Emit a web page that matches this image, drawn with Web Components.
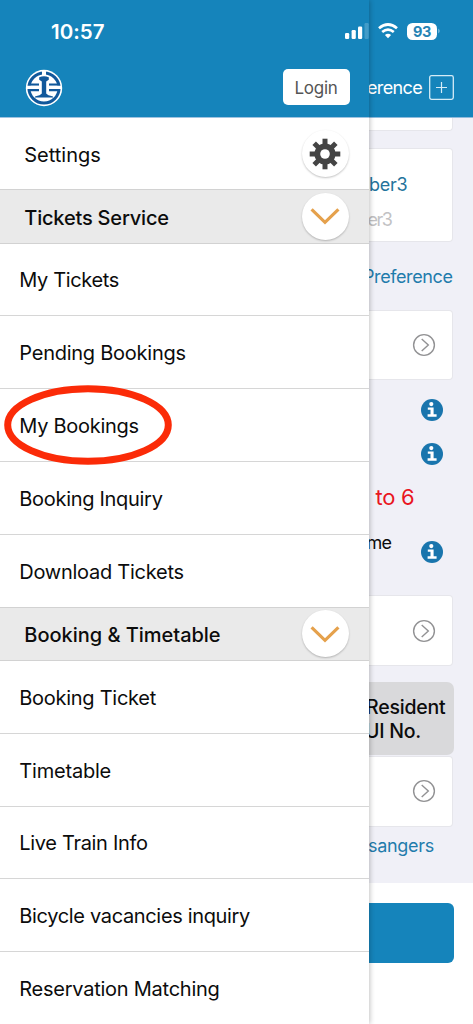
<!DOCTYPE html>
<html lang="en">
<head>
<meta charset="utf-8">
<title>Railway booking menu</title>
<style>
html,body{margin:0;height:100%;overflow:hidden;background:#fff}
body{font-family:Inter,"Liberation Sans",sans-serif;color:#0c0c0c}
</style>
</head>
<body>
<rail-app></rail-app>
<script>
const define = (name, html, setup) => {
  const t = document.createElement('template');
  t.innerHTML = html;
  customElements.define(name, class extends HTMLElement {
    constructor() {
      super();
      this.attachShadow({mode: 'open'}).append(t.content.cloneNode(true));
    }
    connectedCallback() { if (setup) setup(this, this.shadowRoot); }
  });
};

/* Label tracked out or in so that its text spans the width given in w */
define('fit-label', `<style>:host{display:inline-block;white-space:nowrap}span{display:inline-block}</style><span><slot></slot></span>`,
  (el, root) => {
    const span = root.querySelector('span');
    const n = el.textContent.length;
    span.style.letterSpacing = '0px';
    const natural = span.getBoundingClientRect().width;
    span.style.letterSpacing = ((Number(el.getAttribute('w')) - natural) / n).toFixed(3) + 'px';
  });

define('rail-logo', `<style>:host{display:block;width:38px;height:38px}svg{display:block}</style>
<svg width="38" height="38" viewBox="-19 -19 38 38">
<circle r="18.2" fill="#fff"/><circle r="15.1" fill="none" stroke="#11589b" stroke-width="3"/>
<path d="M-15.5-3.4H-5M5-3.4H15.5M-15.5 2.2H-5M5 2.2H15.5" stroke="#11589b" stroke-width="2.3"/>
<path d="M0-18V-11" stroke="#fff" stroke-width="4"/>
<path d="M-17.5-.6H17.5" stroke="#fff" stroke-width="3.1"/>
<path d="M-4.8-10.8Q0-12.8 4.8-10.8V-8.2L2.2-6.6V5.4Q3.4 7.2 9 8.4V9.6H-9V8.4Q-3.4 7.2-2.2 5.4V-6.6L-4.8-8.2Z" fill="#11589b"/>
</svg>`);

define('login-button', `<style>:host{display:flex;align-items:center;justify-content:center;width:67px;height:36.5px;border-radius:5px;background:#fff;color:#555;font-size:17px}</style><slot></slot>`);

define('menu-header', `<style>:host{display:flex;box-sizing:border-box;height:118px;padding:68.5px 19.5px 0 24.5px;align-items:flex-start;justify-content:space-between;background:#1584bb;border-bottom:1px solid #9fc3e0}</style>
<rail-logo></rail-logo><login-button><fit-label w="43" style="position:relative;top:1px">Login</fit-label></login-button>`);

define('round-button', `<style>:host{display:flex;align-items:center;justify-content:center;width:47px;height:47px;border-radius:50%;background:#fff;box-shadow:0 1px 2px rgba(0,0,0,.24)}svg{display:none}:host([icon=gear]) .gear,:host([icon=chevron]) .chevron{display:block}</style>
<svg class="gear" width="32" height="32" viewBox="-16 -16 32 32"><g fill="#444"><path d="M-2.5-15.3H2.5V15.3H-2.5Z"/><path d="M-2.5-15.3H2.5V15.3H-2.5Z" transform="rotate(45)"/><path d="M-2.5-15.3H2.5V15.3H-2.5Z" transform="rotate(90)"/><path d="M-2.5-15.3H2.5V15.3H-2.5Z" transform="rotate(135)"/><circle r="10.6"/></g><circle r="4.8" fill="#fff"/></svg>
<svg class="chevron" width="32" height="20" viewBox="0 0 32 20"><path d="M2.6 3.4L16 16.3L29.4 3.4" fill="none" stroke="#e5a14c" stroke-width="3.2"/></svg>`);

define('menu-settings', `<style>:host{display:flex;box-sizing:border-box;height:71px;padding:0 20.5px 0 24.3px;align-items:center;justify-content:space-between;font-size:20px}slot{display:block;padding-top:2.5px}</style><slot></slot><round-button icon="gear"></round-button>`);

define('menu-group', `<style>:host{display:flex;box-sizing:border-box;height:54.5px;padding:0 20.5px 0 24.3px;align-items:center;justify-content:space-between;background:#eaeaea;border-top:1px solid #d2d2d2;border-bottom:1px solid #d2d2d2;font-size:20px;font-weight:550}slot{display:block;padding-top:var(--drop,3px)}</style><slot></slot><round-button icon="chevron"></round-button>`);

define('menu-item', `<style>:host{display:flex;position:relative;box-sizing:border-box;height:72.8px;padding:2px 0 0 19.3px;align-items:center;border-bottom:1px solid #d6d6d6;font-size:20px}:host([last]){border:0}
svg{display:none;position:absolute;left:3px;top:-5px}:host([marked]) svg{display:block}</style><slot></slot>
<svg width="170" height="82" viewBox="0 0 170 82"><ellipse cx="85" cy="41" rx="80.3" ry="36.3" fill="none" stroke="#fb2b08" stroke-width="7"/></svg>`);

define('side-menu', `<style>:host{display:block;position:relative;z-index:1;height:1024px;background:#fff;box-shadow:1px 0 5px rgba(0,0,0,.24)}</style>
<menu-header></menu-header>
<menu-settings><fit-label w="76.5">Settings</fit-label></menu-settings>
<menu-group><fit-label w="144.5">Tickets Service</fit-label></menu-group>
<menu-item><fit-label w="99.7">My Tickets</fit-label></menu-item>
<menu-item><fit-label w="166.5">Pending Bookings</fit-label></menu-item>
<menu-item marked><fit-label w="119.5">My Bookings</fit-label></menu-item>
<menu-item><fit-label w="143.3">Booking Inquiry</fit-label></menu-item>
<menu-item last style="padding-top:1px"><fit-label w="164.5">Download Tickets</fit-label></menu-item>
<menu-group style="height:54px;margin-top:-.5px;--drop:1.5px"><fit-label w="196.3">Booking &amp; Timetable</fit-label></menu-group>
<menu-item><fit-label w="136.7">Booking Ticket</fit-label></menu-item>
<menu-item><fit-label w="91.8">Timetable</fit-label></menu-item>
<menu-item><fit-label w="128.3">Live Train Info</fit-label></menu-item>
<menu-item><fit-label w="230.7">Bicycle vacancies inquiry</fit-label></menu-item>
<menu-item last style="padding-top:0"><fit-label w="200.3">Reservation Matching</fit-label></menu-item>`);

define('page-header', `<style>:host{display:flex;box-sizing:border-box;height:118px;padding:75px 19px 0 0;justify-content:flex-end;gap:7px;background:#1584bb;color:#fff;font-size:18px;line-height:25px;border-bottom:1px solid #8fbbdc}svg{flex:none}</style>
<fit-label w="55">erence</fit-label>
<svg width="25" height="25" viewBox="0 0 25 25"><rect x=".7" y=".7" width="23.6" height="23.6" rx="1.8" fill="none" stroke="#d5ecf7" stroke-width="1.3"/><path d="M7 12.5H18M12.5 7V18" stroke="#d5ecf7" stroke-width="1.2"/></svg>`);

define('page-card', `<style>:host{display:flex;flex-direction:column;justify-content:center;box-sizing:border-box;height:71px;width:84px;background:#fff;border:1.5px solid #e6e6eb;border-left:0;border-radius:0 4px 4px 0}
:host([go]){align-items:flex-end;padding-right:16.5px}svg{display:none}:host([go]) svg{display:block}</style><slot></slot>
<svg width="24" height="24" viewBox="0 0 24 24" fill="none" stroke="#929294" stroke-width="1.4"><circle cx="12" cy="12" r="10.4"/><path d="M9.7 6.1L16.3 12L9.7 17.9"/></svg>`);

define('info-dot', `<style>:host{display:block;width:22px;height:22px}svg{display:block}</style>
<svg width="22" height="22" viewBox="0 0 22 22"><circle cx="11" cy="11" r="11" fill="#1975ad"/><circle cx="10.3" cy="5.1" r="2.1" fill="#fff"/><path d="M6.8 8.5H12.6V15.3H15.6V17.7H6.6V15.3H9.5V10.8H6.8Z" fill="#fff"/></svg>`);

define('booking-page', `<style>
:host{display:block;height:1024px;overflow:hidden;background:#fff}
.body{height:765px;background:#f0f0f7;overflow:hidden;display:flex;flex-direction:column}
.body>*{flex:none}
.row{display:flex;box-sizing:border-box;align-items:center}
.link{color:#1f7cac;font-size:18px}
.first{height:13px;border-top:0;border-radius:0 0 4px 0;margin-bottom:17px}
.tall{height:94px;justify-content:flex-start;padding-top:17.5px}
.name{color:#24739c;font-size:18px;height:35px;line-height:35px}
.ghost{color:#c2c2c4;font-size:18px;height:35px;line-height:35px}
.info{justify-content:flex-end;padding-right:30px}
.limit{color:#e9161f;font-size:22px;padding-left:6.5px}
.time{justify-content:space-between;padding-right:30px;font-size:18px}
.note{box-sizing:border-box;width:84.5px;height:73px;background:#d9d9db;border-radius:0 7px 7px 0;font-size:19.5px;font-weight:500;line-height:24px;padding:13.5px 0 0;display:flex;flex-direction:column}
.buy{width:84.5px;height:60px;margin-top:20px;background:#1584bb;border-radius:0 6px 6px 0}
</style>
<page-header></page-header>
<div class="body">
<page-card class="first"></page-card>
<page-card class="tall"><fit-label class="name" w="38.5">ber3</fit-label><fit-label class="ghost" w="24" style="margin-left:-1.5px">er3</fit-label></page-card>
<div class="row link" style="height:68px;margin-left:-6px"><fit-label w="89.5">Preference</fit-label></div>
<page-card go style="height:70px"></page-card>
<div class="row info" style="height:60px"><info-dot></info-dot></div>
<div class="row info" style="height:27px"><info-dot></info-dot></div>
<div class="row limit" style="height:59px"><fit-label w="39">to 6</fit-label></div>
<div class="row time" style="height:51px"><fit-label w="24.5" style="position:relative;top:-9.5px;left:-2.5px">me</fit-label><info-dot></info-dot></div>
<page-card go style="margin-top:18px"></page-card>
<div class="note" style="margin-top:15.5px"><fit-label w="79.5" style="margin-left:-3px">Resident</fit-label><fit-label w="56" style="margin-left:-4px">UI No.</fit-label></div>
<page-card go style="margin-top:1px"></page-card>
<div class="row link" style="height:38px;margin-left:-1px"><fit-label w="66">sangers</fit-label></div>
</div>
<div class="buy"></div>`);

define('status-bar', `<style>
:host{display:flex;position:absolute;left:0;top:0;z-index:2;box-sizing:border-box;width:473px;height:62px;padding:0 32px 0 51px;align-items:center;justify-content:space-between;color:#fff;font-size:20.5px;font-weight:600}
.right{display:flex;align-items:center;gap:9px}
.battery{display:flex;align-items:center}
.level{display:flex;align-items:center;justify-content:center;width:30px;height:17px;border-radius:5.5px;background:#fff;color:#2583b4;font-size:14.5px;font-weight:700}
</style>
<fit-label w="53.5">10:57</fit-label>
<div class="right">
<svg width="24" height="16" viewBox="0 0 24 16" fill="#fff"><rect x="0" y="10" width="4.2" height="6" rx="1.2"/><rect x="6.6" y="7" width="4.2" height="9" rx="1.2"/><rect x="13" y="3.5" width="4.2" height="12.5" rx="1.2"/><rect x="19.5" y="0" width="4.2" height="16" rx="1.2" opacity=".2"/></svg>
<svg width="20" height="16" viewBox="0 0 20 16" fill="none" stroke="#fff" stroke-width="2.7"><path d="M1 5.3Q10-2.3 19 5.3"/><path d="M4.2 9Q10 4.2 15.8 9"/><path d="M6.9 12L10 15.2L13.1 12Q10 9.4 6.9 12Z" fill="#fff" stroke="none"/></svg>
<div class="battery"><div class="level"><fit-label w="18">93</fit-label></div><svg width="4" height="8" viewBox="0 0 4 8"><path d="M1.3 1.5Q4 4 1.3 6.5Z" fill="#8fc4df"/></svg></div>
</div>`);

define('rail-app', `<style>:host{display:grid;grid-template-columns:369px 104px;position:relative;width:473px;height:1024px;overflow:hidden}</style>
<side-menu></side-menu><booking-page></booking-page><status-bar></status-bar>`);
</script>
</body>
</html>
